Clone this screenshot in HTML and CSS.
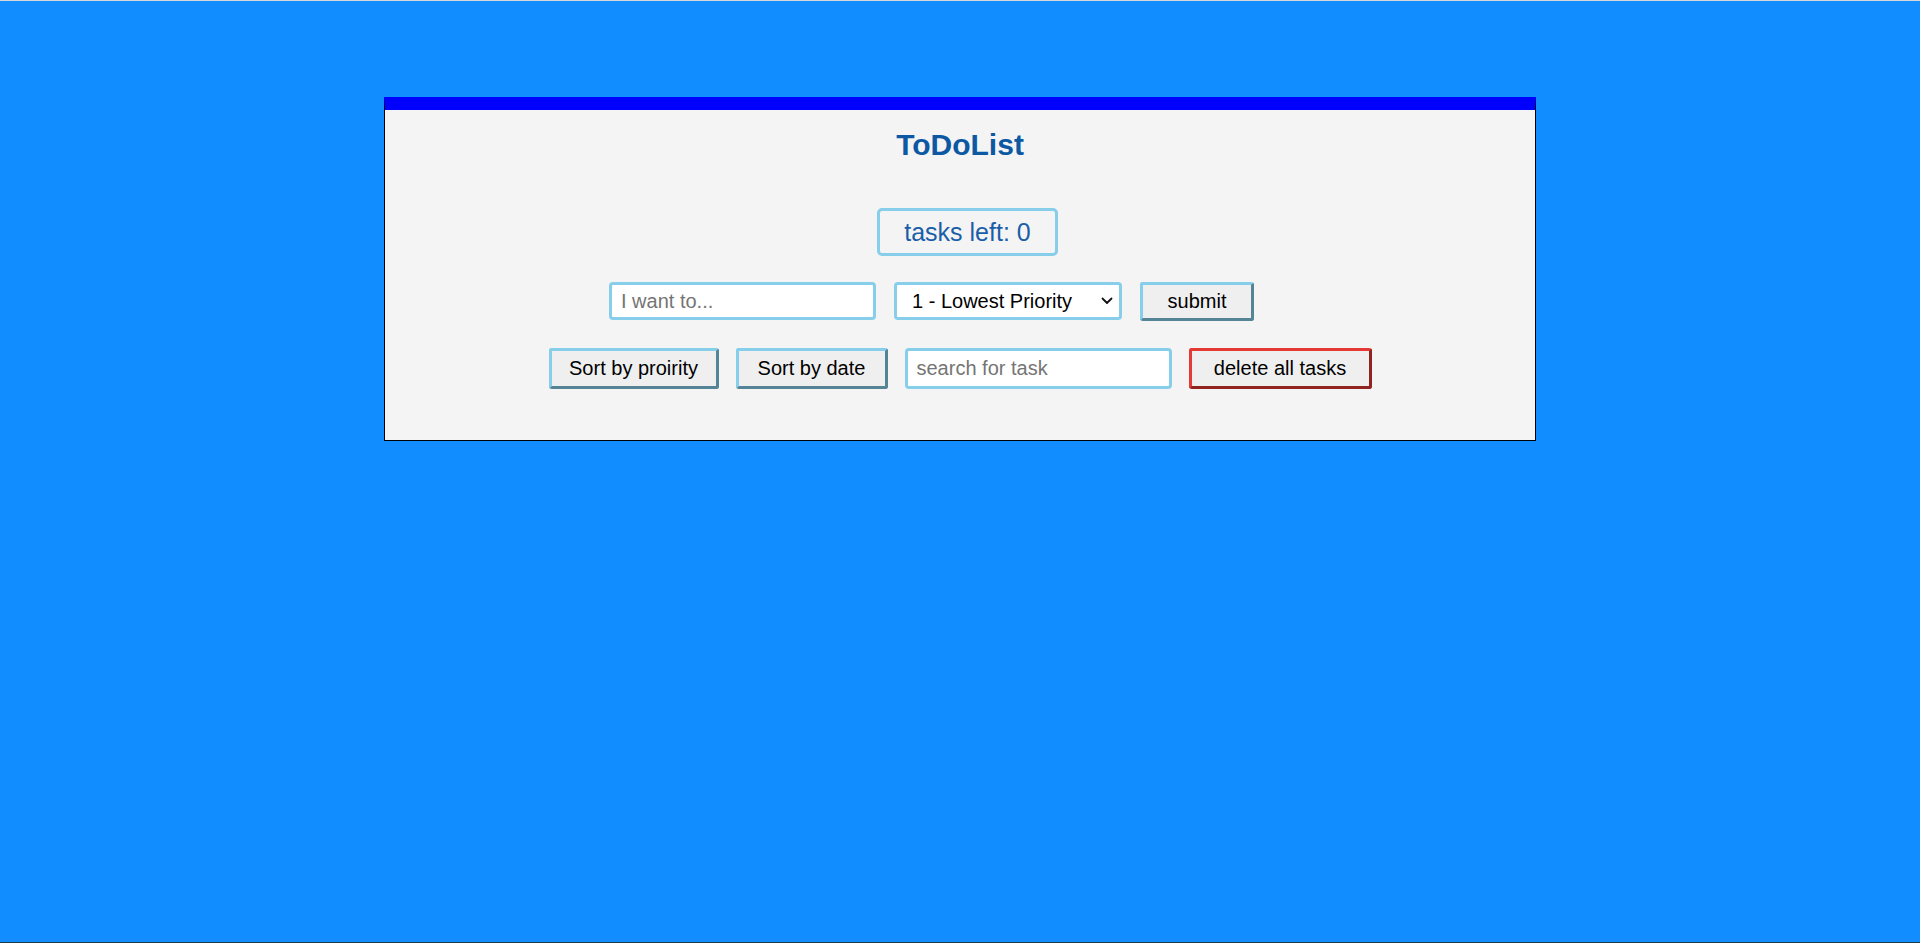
FILE: index.html
```html
<!DOCTYPE html>
<html lang="en">
<head>
<meta charset="utf-8">
<title>ToDoList</title>
<link rel="stylesheet" href="styles.css">
</head>
<body>
<main class="card">
  <h1 class="title">ToDoList</h1>
  <div class="counter-row">
    <div class="counter">tasks left: 0</div>
  </div>
  <form class="add-row" onsubmit="return false">
    <input class="field field-task" type="text" placeholder="I want to...">
    <div class="select-wrap">
      <select class="priority">
        <option>1 - Lowest Priority</option>
        <option>2 - Low Priority</option>
        <option>3 - Medium Priority</option>
        <option>4 - High Priority</option>
        <option>5 - Highest Priority</option>
      </select>
      <svg class="chevron" width="12" height="8" viewBox="0 0 12 8" aria-hidden="true">
        <path d="M1.5 1.5 L6 6 L10.5 1.5" fill="none" stroke="#111" stroke-width="1.8" stroke-linecap="round" stroke-linejoin="round"/>
      </svg>
    </div>
    <button class="btn btn-submit" type="submit">submit</button>
  </form>
  <div class="tools-row">
    <button class="btn btn-sort-priority" type="button">Sort by proirity</button>
    <button class="btn btn-sort-date" type="button">Sort by date</button>
    <input class="field field-search" type="text" placeholder="search for task">
    <button class="btn btn-delete" type="button">delete all tasks</button>
  </div>
</main>
</body>
</html>
```

FILE: styles.css
```css
html, body {
  margin: 0;
  padding: 0;
}

body {
  background: #118dff;
  font-family: "Liberation Sans", Arial, sans-serif;
  min-height: 100vh;
  box-sizing: border-box;
  padding-top: 97px;
  box-shadow: inset 0 1px #d6d6d6, inset 0 -1px #1d3a48;
}

.card {
  width: 1150px;
  margin: 0 auto;
  background: #f4f4f4;
  border: 1px solid #000;
  border-top: 13px solid #0000ff;
  padding: 18px 0 51px;
}

.title {
  margin: 0;
  font-size: 30px;
  line-height: 34px;
  font-weight: bold;
  color: #0d58a3;
  text-align: center;
}

.counter-row {
  display: flex;
  justify-content: center;
  margin-top: 46px;
}

.counter {
  margin-left: 15px;
  box-sizing: border-box;
  width: 181px;
  height: 48px;
  border: 3px solid #87ceeb;
  border-radius: 5px;
  font-size: 25px;
  line-height: 42px;
  text-align: center;
  color: #1a5ea8;
}

.add-row {
  display: flex;
  justify-content: center;
  align-items: flex-start;
  gap: 18px;
  margin: 26px 0 0;
  padding-right: 57px;
}

.tools-row {
  display: flex;
  justify-content: center;
  align-items: flex-start;
  gap: 17px;
  margin-top: 27px;
}

.field {
  box-sizing: border-box;
  width: 267px;
  height: 38px;
  border: 3px solid #87ceeb;
  border-radius: 4px;
  background: #fff;
  padding: 0 9px;
  font-family: "Liberation Sans", Arial, sans-serif;
  font-size: 20px;
  color: #000;
  outline: none;
}

.field::placeholder {
  color: #757575;
}

.field-search {
  height: 41px;
}

.select-wrap {
  position: relative;
  width: 228px;
  height: 38px;
}

.priority {
  appearance: none;
  -webkit-appearance: none;
  box-sizing: border-box;
  width: 228px;
  height: 38px;
  border: 3px solid #87ceeb;
  border-radius: 4px;
  background: #fff;
  padding: 0 30px 0 15px;
  font-family: "Liberation Sans", Arial, sans-serif;
  font-size: 20px;
  color: #000;
  outline: none;
}

.chevron {
  position: absolute;
  right: 9px;
  top: 15px;
  pointer-events: none;
}

.btn {
  box-sizing: border-box;
  height: 41px;
  border: 3px outset #87ceeb;
  border-radius: 3px;
  background: #efefef;
  padding: 0;
  font-family: "Liberation Sans", Arial, sans-serif;
  font-size: 20px;
  color: #000;
  cursor: pointer;
}

.btn-submit {
  width: 114px;
  height: 39px;
}

.btn-sort-priority {
  width: 170px;
}

.btn-sort-date {
  width: 152px;
}

.btn-delete {
  width: 183px;
  border-color: #e53935;
}
```
